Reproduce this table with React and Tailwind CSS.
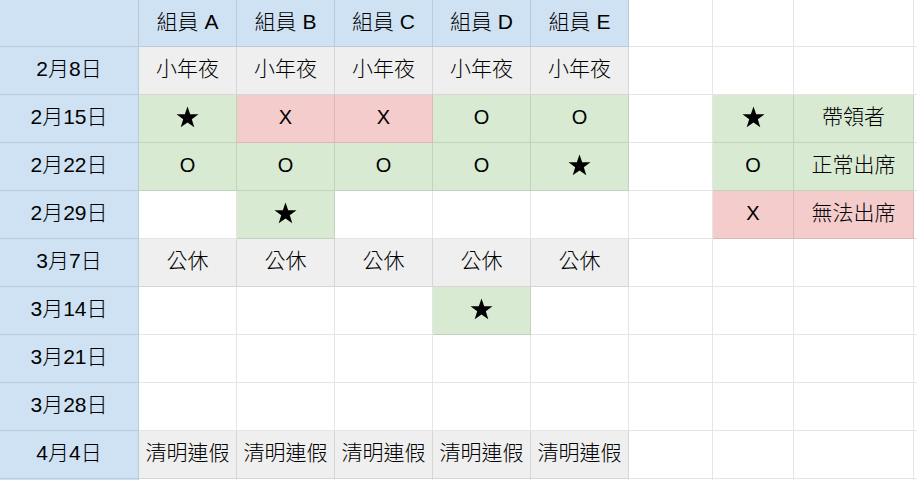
import React from "react";

const BG = {
  b: "bg-[#cfe2f3]",
  g: "bg-[#efefef]",
  n: "bg-[#d9ead3]",
  r: "bg-[#f4cccc]",
  w: "bg-white",
};

function Star() {
  return (
    <svg width="23" height="22" viewBox="0 0 24 23" aria-hidden="true">
      <polygon
        points="12,0.5 14.8,8.6 23.5,8.7 16.5,13.9 19.1,22.3 12,17.3 4.9,22.3 7.5,13.9 0.5,8.7 9.2,8.6"
        fill="#000"
      />
    </svg>
  );
}

const S = "__STAR__";

const rows = [
  {
    cells: [
      ["", "b"],
      ["組員 A", "b"],
      ["組員 B", "b"],
      ["組員 C", "b"],
      ["組員 D", "b"],
      ["組員 E", "b"],
      ["", "w"],
      ["", "w"],
      ["", "w"],
      ["", "w"],
    ],
  },
  {
    cells: [
      ["2月8日", "b"],
      ["小年夜", "g"],
      ["小年夜", "g"],
      ["小年夜", "g"],
      ["小年夜", "g"],
      ["小年夜", "g"],
      ["", "w"],
      ["", "w"],
      ["", "w"],
      ["", "w"],
    ],
  },
  {
    cells: [
      ["2月15日", "b"],
      [S, "n"],
      ["X", "r"],
      ["X", "r"],
      ["O", "n"],
      ["O", "n"],
      ["", "w"],
      [S, "n"],
      ["帶領者", "n"],
      ["", "w"],
    ],
  },
  {
    cells: [
      ["2月22日", "b"],
      ["O", "n"],
      ["O", "n"],
      ["O", "n"],
      ["O", "n"],
      [S, "n"],
      ["", "w"],
      ["O", "n"],
      ["正常出席", "n"],
      ["", "w"],
    ],
  },
  {
    cells: [
      ["2月29日", "b"],
      ["", "w"],
      [S, "n"],
      ["", "w"],
      ["", "w"],
      ["", "w"],
      ["", "w"],
      ["X", "r"],
      ["無法出席", "r"],
      ["", "w"],
    ],
  },
  {
    cells: [
      ["3月7日", "b"],
      ["公休", "g"],
      ["公休", "g"],
      ["公休", "g"],
      ["公休", "g"],
      ["公休", "g"],
      ["", "w"],
      ["", "w"],
      ["", "w"],
      ["", "w"],
    ],
  },
  {
    cells: [
      ["3月14日", "b"],
      ["", "w"],
      ["", "w"],
      ["", "w"],
      [S, "n"],
      ["", "w"],
      ["", "w"],
      ["", "w"],
      ["", "w"],
      ["", "w"],
    ],
  },
  {
    cells: [
      ["3月21日", "b"],
      ["", "w"],
      ["", "w"],
      ["", "w"],
      ["", "w"],
      ["", "w"],
      ["", "w"],
      ["", "w"],
      ["", "w"],
      ["", "w"],
    ],
  },
  {
    cells: [
      ["3月28日", "b"],
      ["", "w"],
      ["", "w"],
      ["", "w"],
      ["", "w"],
      ["", "w"],
      ["", "w"],
      ["", "w"],
      ["", "w"],
      ["", "w"],
    ],
  },
  {
    cells: [
      ["4月4日", "b"],
      ["清明連假", "g"],
      ["清明連假", "g"],
      ["清明連假", "g"],
      ["清明連假", "g"],
      ["清明連假", "g"],
      ["", "w"],
      ["", "w"],
      ["", "w"],
      ["", "w"],
    ],
  },
  {
    cells: [
      ["", "b"],
      ["", "w"],
      ["", "w"],
      ["", "w"],
      ["", "w"],
      ["", "w"],
      ["", "w"],
      ["", "w"],
      ["", "w"],
      ["", "w"],
    ],
  },
];

export default function App() {
  return (
    <div className="w-[917px] h-[480px] overflow-hidden bg-white font-['Liberation_Sans','Noto_Sans_CJK_TC',sans-serif] text-[21px] font-light text-black">
      <div className="grid grid-cols-[139px_98px_98px_98px_98px_98px_84px_81px_120px_100px] w-[1015px]">
        {rows.map((row, ri) =>
          row.cells.map(([text, bg], ci) => (
            <div
              key={ri + "-" + ci}
              className={
                "flex items-center justify-center border-r border-b border-black/10 pb-[3px] " +
                (ri === 0 ? "h-[47px] " : "h-[48px] ") +
                (text === "X" || text === "O" ? "text-[20px] " : "") +
                BG[bg]
              }
            >
              {text === S ? <Star /> : text}
            </div>
          ))
        )}
      </div>
    </div>
  );
}
